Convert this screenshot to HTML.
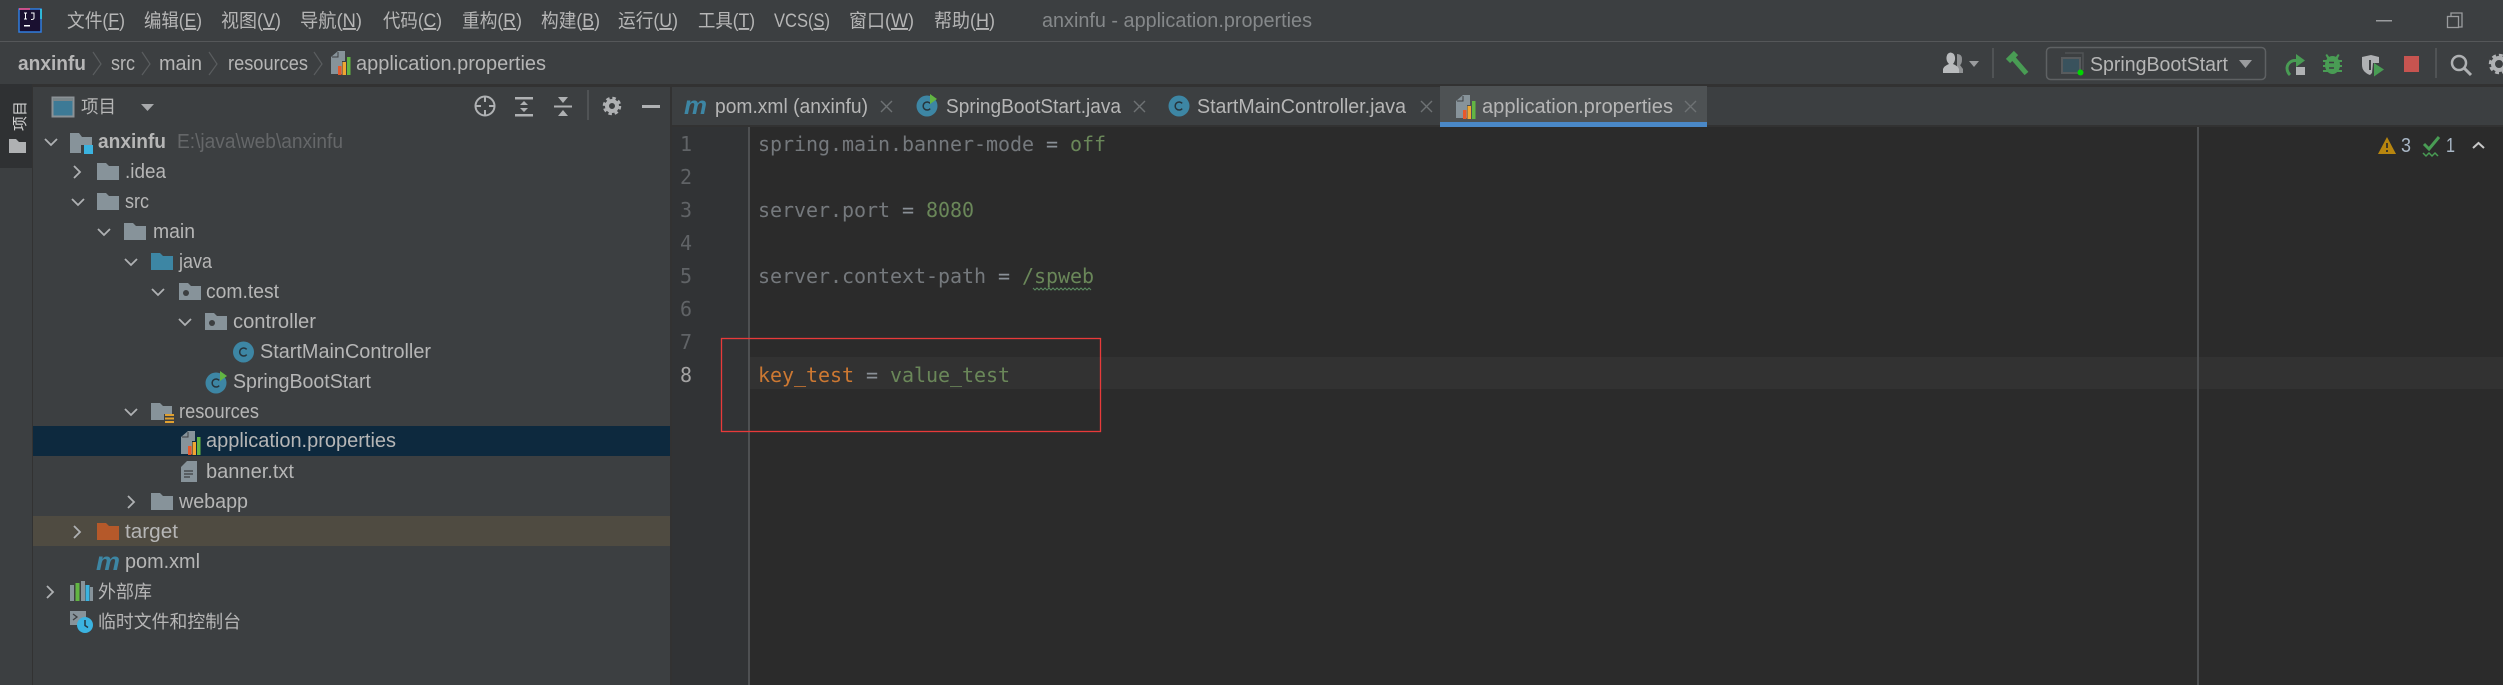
<!DOCTYPE html>
<html><head><meta charset="utf-8"><style>
html,body{margin:0;padding:0;background:#3c3f41;width:2503px;height:685px;overflow:hidden}
svg{display:block}
text{font-family:"Liberation Sans","Noto Sans CJK SC",sans-serif;font-size:20px;fill:#b6b6b6;white-space:pre}
.m text{font-size:19px;fill:#b6b6b6}
.c text,text.c{font-family:"DejaVu Sans Mono","Liberation Mono",monospace;font-size:20px}
.n{fill:#606366;font-family:"DejaVu Sans Mono",monospace;font-size:20px}
.k{fill:#75797d}.o{fill:#cc7832}.v{fill:#6a8759}.eq{fill:#8a9097}
</style></head><body>
<svg xmlns="http://www.w3.org/2000/svg" width="2503" height="685" viewBox="0 0 2503 685">
<defs>
<path id="fold" d="M0 0h9l3 3h10v14H0z"/>
<path id="chd" d="M0 0l6 6 6-6" fill="none" stroke="#afb1b3" stroke-width="1.800"/>
<path id="chr" d="M0 0l6 6-6 6" fill="none" stroke="#afb1b3" stroke-width="1.800"/>
<g id="pkg"><path d="M0 0h9l3 3h10v14H0z" fill="#87939a"/><circle cx="7" cy="10" r="3" fill="#3c3f41"/></g>
<g id="cls"><circle cx="0" cy="0" r="10.500" fill="#3d86a4"/><path d="M3.200-2.600A4 4 0 1 0 3.200 2.600" fill="none" stroke="#26343c" stroke-width="1.500"/></g>
<g id="prop"><path d="M0 6L7 0h7v10h-3v13H0z" fill="#87939a"/><path d="M7 1v5H1" fill="none" stroke="#3c3f41" stroke-width="1"/><rect x="7" y="15" width="3.500" height="9" fill="#e8582a"/><rect x="11.500" y="11" width="3.500" height="13" fill="#f0a732"/><rect x="16" y="6" width="3.500" height="18" fill="#62b543"/></g>
<path id="x" d="M0 0l11 11M11 0L0 11" stroke="#6e7274" stroke-width="1.400" fill="none"/>
</defs>

<rect width="2503" height="685" fill="#3c3f41"/>
<!-- title bar -->
<rect x="0" y="41" width="2503" height="1" fill="#555759"/>
<g>
<rect x="19" y="9" width="22" height="23" fill="#1a1030"/>
<path d="M19 9h22v23H19z" fill="none" stroke="#2f7de0" stroke-width="1.500"/>
<path d="M19 9h11" stroke="#ff4f8a" stroke-width="1.500"/><path d="M41 9v10" stroke="#30d8f0" stroke-width="1.500"/>
<path d="M24 13h3M25.500 13v6M24 19h3M31 13h3v5q0 1.500-3 1.500" stroke="#fff" stroke-width="1" fill="none"/>
<rect x="24" y="25" width="6" height="1.500" fill="#fff"/>
</g>
<g class="m">
<text x="67" y="27" textLength="58" lengthAdjust="spacingAndGlyphs">文件(<tspan text-decoration="underline">F</tspan>)</text>
<text x="144" y="27" textLength="58" lengthAdjust="spacingAndGlyphs">编辑(<tspan text-decoration="underline">E</tspan>)</text>
<text x="221" y="27" textLength="60" lengthAdjust="spacingAndGlyphs">视图(<tspan text-decoration="underline">V</tspan>)</text>
<text x="300" y="27" textLength="62" lengthAdjust="spacingAndGlyphs">导航(<tspan text-decoration="underline">N</tspan>)</text>
<text x="383" y="27" textLength="59" lengthAdjust="spacingAndGlyphs">代码(<tspan text-decoration="underline">C</tspan>)</text>
<text x="462" y="27" textLength="60" lengthAdjust="spacingAndGlyphs">重构(<tspan text-decoration="underline">R</tspan>)</text>
<text x="541" y="27" textLength="59" lengthAdjust="spacingAndGlyphs">构建(<tspan text-decoration="underline">B</tspan>)</text>
<text x="618" y="27" textLength="60" lengthAdjust="spacingAndGlyphs">运行(<tspan text-decoration="underline">U</tspan>)</text>
<text x="698" y="27" textLength="57" lengthAdjust="spacingAndGlyphs">工具(<tspan text-decoration="underline">T</tspan>)</text>
<text x="774" y="27" textLength="56" lengthAdjust="spacingAndGlyphs">VCS(<tspan text-decoration="underline">S</tspan>)</text>
<text x="849" y="27" textLength="65" lengthAdjust="spacingAndGlyphs">窗口(<tspan text-decoration="underline">W</tspan>)</text>
<text x="934" y="27" textLength="61" lengthAdjust="spacingAndGlyphs">帮助(<tspan text-decoration="underline">H</tspan>)</text>
</g>
<text x="1042" y="27" textLength="270" lengthAdjust="spacingAndGlyphs" style="fill:#85888a">anxinfu - application.properties</text>
<rect x="2376" y="20" width="16" height="1.500" fill="#9a9c9e"/>
<path d="M2451 16v-3h11v14h-3" fill="none" stroke="#9a9c9e" stroke-width="1.300"/><rect x="2447.500" y="16.500" width="11" height="11" fill="none" stroke="#9a9c9e" stroke-width="1.300"/>

<!-- nav bar -->
<text x="18" y="70" textLength="68" lengthAdjust="spacingAndGlyphs" font-weight="bold">anxinfu</text>
<path id="s1" d="M93 52l8 12-8 11M142 52l8 12-8 11M209 52l8 12-8 11M314 52l8 12-8 11" fill="none" stroke="#5a5d5f" stroke-width="1.200"/>
<text x="111" y="70" textLength="24" lengthAdjust="spacingAndGlyphs">src</text>
<text x="159" y="70" textLength="43" lengthAdjust="spacingAndGlyphs">main</text>
<text x="228" y="70" textLength="80" lengthAdjust="spacingAndGlyphs">resources</text>
<use href="#prop" x="331" y="51"/>
<text x="356" y="70" textLength="190" lengthAdjust="spacingAndGlyphs">application.properties</text>
<!-- nav right -->
<path d="M1957 54q5 0 5 5t-2 6l3 4v4h-6z" fill="#8f9193"/>
<path d="M1943 73v-4q1-3 6-5-3-3-2.500-7t4-4.500q4 .5 4.500 4.500t-2 7q5 2 6 5v4z" fill="#b9bbbd"/>
<path d="M1969 61h10l-5 6z" fill="#9a9c9e"/>
<rect x="1992" y="48" width="2" height="30" fill="#505355"/>
<path d="M2008 61l8-8" stroke="#499c54" stroke-width="6"/><path d="M2013 58l13.500 15.500" stroke="#499c54" stroke-width="5"/>
<rect x="2046.500" y="47.500" width="219" height="32" rx="4" fill="none" stroke="#5e6163" stroke-width="1.500"/>
<path d="M2065 53h18v17" fill="none" stroke="#505355" stroke-width="1.500"/><rect x="2062" y="58" width="18" height="15" fill="#39525d" stroke="#585b5d" stroke-width="2"/>
<circle cx="2080.500" cy="72.500" r="3" fill="#00d600"/>
<text x="2090" y="71" textLength="138" lengthAdjust="spacingAndGlyphs">SpringBootStart</text>
<path d="M2239 60h13l-6.500 8z" fill="#9a9c9e"/>
<path d="M2298 60.500h-3a8 8 0 0 0-8 7.500q0 4 3 7" fill="none" stroke="#499c54" stroke-width="3"/><path d="M2296 54l9 6.500-9 6.500z" fill="#499c54"/><rect x="2296" y="67" width="9" height="8" fill="#afb1b3"/>
<g fill="#499c54"><ellipse cx="2332.500" cy="65" rx="7.500" ry="9"/><rect x="2323" y="60" width="19" height="2"/><rect x="2323" y="65" width="19" height="2"/><rect x="2323" y="70" width="19" height="2"/><path d="M2327 54l3 4h5l3-4 1.500 1-3 6h-8l-3-6z"/></g>
<path d="M2334 62.500h-5M2334 68h-5" stroke="#3c3f41" stroke-width="1.500"/>
<path d="M2362 57l9-2 8 2v6h-6l-1 10-2 2q-8-3-8-10z" fill="#afb1b3"/><path d="M2370 60v10" stroke="#3c3f41" stroke-width="2"/><path d="M2374 63l10 6.500-10 7z" fill="#499c54"/>
<rect x="2404" y="56" width="15" height="16" fill="#c75450"/>
<rect x="2435" y="48" width="2" height="30" fill="#505355"/>
<circle cx="2459" cy="63" r="7" fill="none" stroke="#afb1b3" stroke-width="2.500"/><path d="M2464 68l7 7" stroke="#afb1b3" stroke-width="3"/>
<circle cx="2499" cy="64" r="6" fill="none" stroke="#afb1b3" stroke-width="4"/><circle cx="2499" cy="64" r="9" fill="none" stroke="#afb1b3" stroke-width="2.500" stroke-dasharray="4 3"/>

<rect x="0" y="84" width="2503" height="3" fill="#323232"/>

<!-- left strip -->
<rect x="0" y="84" width="32" height="84" fill="#2f3133"/>
<rect x="32" y="87" width="1" height="598" fill="#323232"/>
<text transform="translate(25,131) rotate(-90)" style="font-size:15px;fill:#d0d0d0">项目</text>
<path d="M9 139h7l3 3h7v11H9z" fill="#afb1b3"/>

<!-- project panel -->
<rect x="33" y="87" width="637" height="598" fill="#3c3f41"/>
<rect x="52.500" y="97.500" width="21" height="19" fill="#3d7a96" stroke="#8b9296" stroke-width="2"/><rect x="53" y="98" width="20" height="3" fill="#7b8589"/>
<text x="81" y="113" textLength="35" lengthAdjust="spacingAndGlyphs" style="font-size:18px">项目</text>
<path d="M141 104h13l-6.500 7z" fill="#a7a9ab"/>
<circle cx="485" cy="106" r="9.500" fill="none" stroke="#afb1b3" stroke-width="2"/><path d="M485 96v6M485 110v6M475 106h6M489 106h6" stroke="#afb1b3" stroke-width="2"/>
<path d="M515 97h18v2.500h-18zM515 114h18v2.500h-18z" fill="#afb1b3"/><path d="M520 105l4-4 4 4zM520 108h8l-4 4z" fill="#afb1b3"/>
<path d="M554 105.500h18v2h-18z" fill="#afb1b3"/><path d="M558 97h10l-5 6zM558 116h10l-5-6z" fill="#afb1b3"/>
<rect x="587" y="90" width="2" height="30" fill="#505355"/>
<circle cx="612" cy="106" r="5" fill="none" stroke="#afb1b3" stroke-width="4"/><circle cx="612" cy="106" r="8" fill="none" stroke="#afb1b3" stroke-width="2.500" stroke-dasharray="3.500 2.800"/>
<rect x="642" y="105" width="18" height="3" fill="#afb1b3"/>

<!-- rows -->
<rect x="33" y="426" width="637" height="30" fill="#0d293e"/>
<rect x="33" y="516" width="637" height="30" fill="#4f4b41"/>

<use href="#chd" x="45" y="139"/>
<path d="M70 133h9l3 4h10v8H81v8H70z" fill="#87939a"/><rect x="84" y="145" width="9" height="9" fill="#3bb3e0"/>
<text x="98" y="148" textLength="68" lengthAdjust="spacingAndGlyphs" font-weight="bold">anxinfu</text>
<text x="177" y="148" textLength="166" lengthAdjust="spacingAndGlyphs" style="fill:#656769">E:\java\web\anxinfu</text>

<use href="#chr" x="74" y="166"/><use href="#fold" x="97" y="163" fill="#87939a"/>
<text x="125" y="178" textLength="41" lengthAdjust="spacingAndGlyphs">.idea</text>

<use href="#chd" x="72" y="199"/><use href="#fold" x="97" y="193" fill="#87939a"/>
<text x="125" y="208" textLength="24" lengthAdjust="spacingAndGlyphs">src</text>

<use href="#chd" x="98" y="229"/><use href="#fold" x="124" y="223" fill="#87939a"/>
<text x="153" y="238" textLength="42" lengthAdjust="spacingAndGlyphs">main</text>

<use href="#chd" x="125" y="259"/><use href="#fold" x="151" y="253" fill="#3d86a4"/>
<text x="179" y="268" textLength="33" lengthAdjust="spacingAndGlyphs">java</text>

<use href="#chd" x="152" y="289"/><use href="#pkg" x="179" y="283"/>
<text x="206" y="298" textLength="73" lengthAdjust="spacingAndGlyphs">com.test</text>

<use href="#chd" x="179" y="319"/><use href="#pkg" x="205" y="313"/>
<text x="233" y="328" textLength="83" lengthAdjust="spacingAndGlyphs">controller</text>

<use href="#cls" x="243.500" y="352"/>
<text x="260" y="358" textLength="171" lengthAdjust="spacingAndGlyphs">StartMainController</text>

<use href="#cls" x="216" y="383"/><path d="M220 371l7 5-7 5z" fill="#62b543"/>
<text x="233" y="388" textLength="138" lengthAdjust="spacingAndGlyphs">SpringBootStart</text>

<use href="#chd" x="125" y="409"/><path d="M151 403h9l3 3h9v8h-8v6h-13z" fill="#87939a"/>
<path d="M165 414h9v2h-9zM165 417.500h9v2h-9zM165 421h9v2h-9z" fill="#e0a030"/>
<text x="179" y="418" textLength="80" lengthAdjust="spacingAndGlyphs">resources</text>

<use href="#prop" x="181" y="431"/>
<text x="206" y="447" textLength="190" lengthAdjust="spacingAndGlyphs">application.properties</text>

<path d="M181 467l6-6h10v21h-16z" fill="#87939a"/><path d="M184 471h9M184 474h9M184 477h6" stroke="#3c3f41" stroke-width="1.300"/>
<text x="206" y="478" textLength="88" lengthAdjust="spacingAndGlyphs">banner.txt</text>

<use href="#chr" x="128" y="496"/><use href="#fold" x="151" y="493" fill="#87939a"/>
<text x="179" y="508" textLength="69" lengthAdjust="spacingAndGlyphs">webapp</text>

<use href="#chr" x="74" y="526"/><use href="#fold" x="97" y="523" fill="#b5592a"/>
<text x="125" y="538" textLength="53" lengthAdjust="spacingAndGlyphs">target</text>

<text x="96" y="570" textLength="24" lengthAdjust="spacingAndGlyphs" style="font-size:25px;font-weight:bold;font-style:italic;fill:#3d86a4">m</text>
<text x="125" y="568" textLength="75" lengthAdjust="spacingAndGlyphs">pom.xml</text>

<use href="#chr" x="47" y="586"/>
<rect x="70" y="585" width="4" height="16" fill="#87939a"/><rect x="75.500" y="583" width="4" height="18" fill="#62b543"/><rect x="81" y="581" width="4" height="20" fill="#87939a"/><rect x="85.500" y="585" width="4" height="16" fill="#3bb3e0"/><rect x="90" y="587" width="3" height="14" fill="#87939a"/>
<text x="98" y="598" textLength="54" lengthAdjust="spacingAndGlyphs" style="font-size:18px">外部库</text>

<rect x="70" y="611" width="16" height="14" fill="#87939a"/><path d="M73 614l4 3-4 3" fill="none" stroke="#3c3f41" stroke-width="1.300"/>
<circle cx="85" cy="625" r="8" fill="#3bb3e0"/><path d="M85 620v5.500l3 2" fill="none" stroke="#243640" stroke-width="1.500"/>
<text x="98" y="628" textLength="143" lengthAdjust="spacingAndGlyphs" style="font-size:18px">临时文件和控制台</text>

<!-- splitter -->
<rect x="670" y="87" width="2" height="598" fill="#323232"/>

<!-- tab bar -->
<rect x="672" y="87" width="1831" height="38" fill="#3c3f41"/>
<rect x="672" y="125" width="1831" height="2" fill="#323232"/>
<rect x="1440" y="86" width="267" height="41" fill="#4e5254"/>
<rect x="1440" y="122" width="267" height="5" fill="#4a88c7"/>
<text x="684" y="114" textLength="23" lengthAdjust="spacingAndGlyphs" style="font-size:25px;font-weight:bold;font-style:italic;fill:#3d86a4">m</text>
<text x="715" y="113" textLength="153" lengthAdjust="spacingAndGlyphs">pom.xml (anxinfu)</text>
<use href="#x" x="881" y="101"/>
<use href="#cls" x="927" y="106"/><path d="M930 94l7 5-7 5z" fill="#62b543"/>
<text x="946" y="113" textLength="175" lengthAdjust="spacingAndGlyphs">SpringBootStart.java</text>
<use href="#x" x="1134" y="101"/>
<use href="#cls" x="1179" y="106"/>
<text x="1197" y="113" textLength="209" lengthAdjust="spacingAndGlyphs">StartMainController.java</text>
<use href="#x" x="1421" y="101"/>
<use href="#prop" x="1456" y="95"/>
<text x="1482" y="113" textLength="191" lengthAdjust="spacingAndGlyphs">application.properties</text>
<use href="#x" x="1685" y="101"/>

<!-- editor -->
<rect x="672" y="127" width="1831" height="558" fill="#2b2b2b"/>
<rect x="672" y="127" width="77" height="558" fill="#313335"/>
<rect x="748" y="127" width="2" height="558" fill="#4e5052"/>
<rect x="750" y="357" width="1753" height="32" fill="#323232"/>
<rect x="2197" y="127" width="2" height="558" fill="#4c4e50"/>

<g class="n">
<text class="n" x="680" y="151">1</text><text class="n" x="680" y="184">2</text><text class="n" x="680" y="217">3</text><text class="n" x="680" y="250">4</text><text class="n" x="680" y="283">5</text><text class="n" x="680" y="316">6</text><text class="n" x="680" y="349">7</text><text class="n" x="680" y="382" style="fill:#a4a3a3">8</text>
</g>
<g class="c">
<text x="758" y="151" textLength="348" xml:space="preserve"><tspan class="k">spring.main.banner-mode</tspan><tspan class="eq"> = </tspan><tspan class="v">off</tspan></text>
<text x="758" y="217" textLength="216" xml:space="preserve"><tspan class="k">server.port</tspan><tspan class="eq"> = </tspan><tspan class="v">8080</tspan></text>
<text x="758" y="283" textLength="336" xml:space="preserve"><tspan class="k">server.context-path</tspan><tspan class="eq"> = </tspan><tspan class="v">/spweb</tspan></text>
<text x="758" y="382" textLength="252" xml:space="preserve"><tspan class="o">key_test</tspan><tspan class="eq"> = </tspan><tspan class="v">value_test</tspan></text>
</g>
<path d="M1033 288l2 2 2-2 2 2 2-2 2 2 2-2 2 2 2-2 2 2 2-2 2 2 2-2 2 2 2-2 2 2 2-2 2 2 2-2 2 2 2-2 2 2 2-2 2 2 2-2 2 2 2-2 2 2 2-2 2 2" fill="none" stroke="#5a8a60" stroke-width="1"/>
<rect x="721.500" y="338.500" width="379" height="93" fill="none" stroke="#e83a3a" stroke-width="1.300"/>

<!-- inspection widget -->
<path d="M2387 137l9 17h-18z" fill="#b8860f"/><path d="M2387 143v5M2387 150v2" stroke="#2b2b2b" stroke-width="1.700"/>
<text x="2401" y="152" textLength="10" lengthAdjust="spacingAndGlyphs" style="fill:#a9b7c6;font-size:20px">3</text>
<path d="M2424 144l5 5 10-12" fill="none" stroke="#499c54" stroke-width="3"/><path d="M2423 153l3 3 3-3 3 3 3-3 3 3" fill="none" stroke="#499c54" stroke-width="1.500"/>
<text x="2446" y="152" textLength="9" lengthAdjust="spacingAndGlyphs" style="fill:#a9b7c6;font-size:20px">1</text>
<path d="M2473 148l5.500-5 5.500 5" fill="none" stroke="#c8c8c8" stroke-width="2"/>
</svg>
</body></html>
